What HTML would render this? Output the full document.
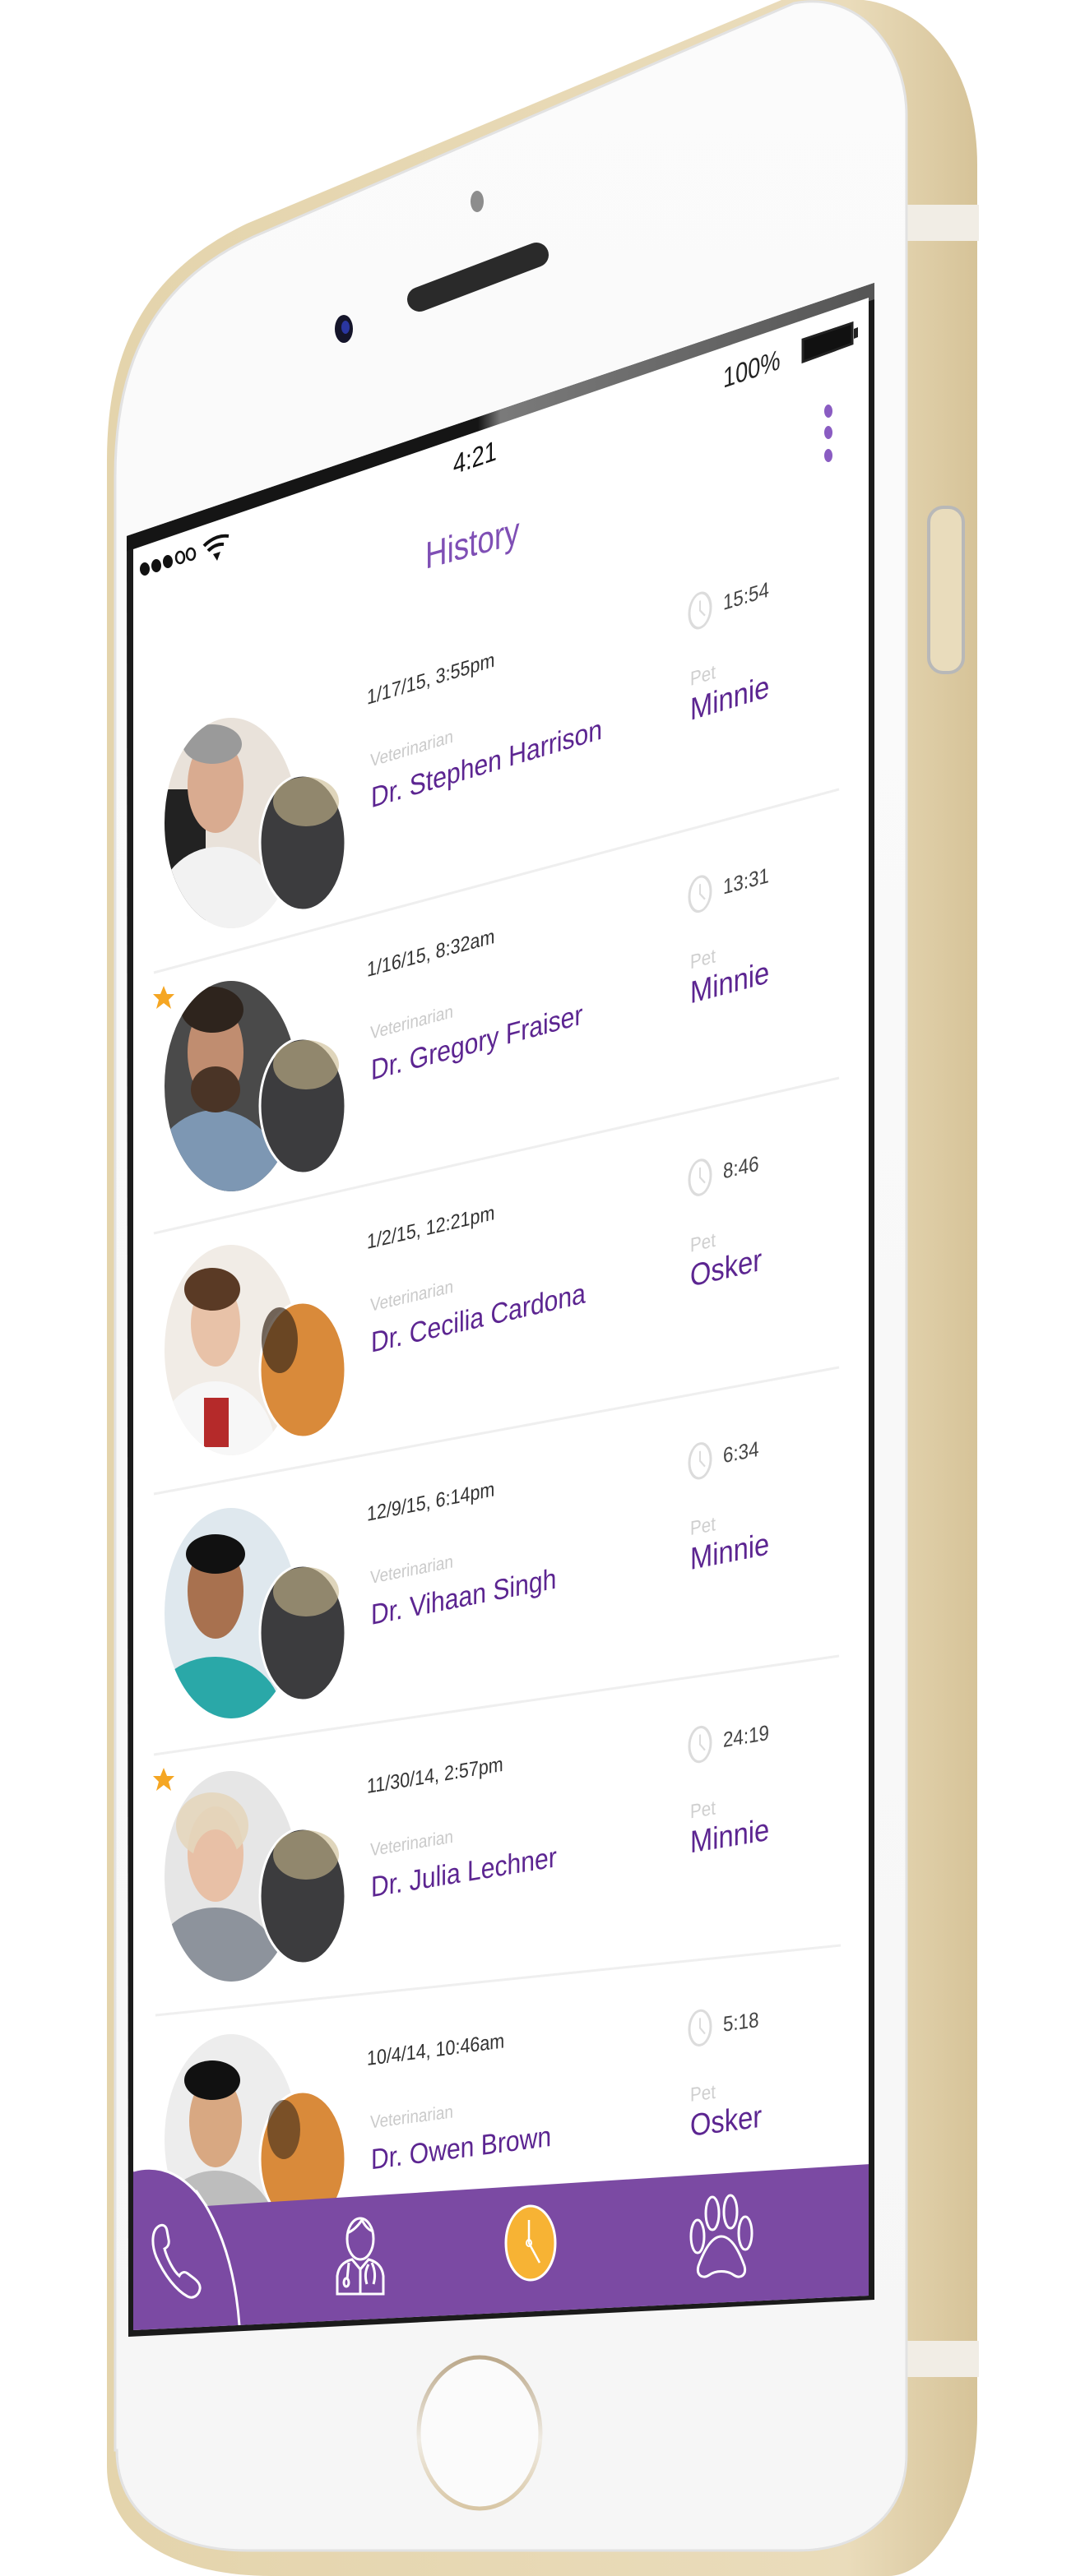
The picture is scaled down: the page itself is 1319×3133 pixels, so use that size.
<!DOCTYPE html>
<html><head><meta charset="utf-8"><style>
html,body{margin:0;padding:0;background:#fff;}
body{width:1319px;height:3133px;overflow:hidden;}
svg{display:block;}
text{font-family:"Liberation Sans",sans-serif;}
</style></head><body>
<svg width="1319" height="3133" viewBox="0 0 1319 3133" xmlns="http://www.w3.org/2000/svg">
<defs>
<linearGradient id="gold" x1="0" x2="1" y1="0" y2="0">
<stop offset="0" stop-color="#e4d4ac"/><stop offset="0.85" stop-color="#eadcbb"/><stop offset="1" stop-color="#d6c398"/>
</linearGradient>
<linearGradient id="face" x1="0" x2="0" y1="0" y2="1">
<stop offset="0" stop-color="#fbfbfb"/><stop offset="1" stop-color="#f6f6f6"/>
</linearGradient>
<linearGradient id="bez" x1="0" x2="1" y1="0" y2="0">
<stop offset="0" stop-color="#151515"/><stop offset="0.47" stop-color="#151515"/><stop offset="0.5" stop-color="#7a7a7a"/><stop offset="1" stop-color="#555"/>
</linearGradient>
<linearGradient id="home" x1="0" x2="0" y1="0" y2="1">
<stop offset="0" stop-color="#bba88a"/><stop offset="0.55" stop-color="#f0ece4"/><stop offset="1" stop-color="#d8c6a4"/>
</linearGradient>
<clipPath id="scr"><polygon points="162,668 1056,362 1056,2792 162,2834"/></clipPath>
</defs>

<!-- phone body -->
<path d="M130,3000 L130,560 C130,420 180,330 300,272 L950,0 L1050,0 C1140,12 1188,100 1188,200 L1188,2940 C1188,3050 1130,3133 1080,3133 L330,3133 C220,3133 130,3090 130,3000 Z" fill="url(#gold)"/>
<rect x="1100" y="249" width="90" height="44" fill="#f1ede5"/>
<rect x="1100" y="2847" width="90" height="44" fill="#f1ede5"/>
<rect x="1129" y="617" width="42" height="201" rx="18" fill="#e9dcbc" stroke="#b8b8b8" stroke-width="4"/>
<path d="M140,2980 L140,580 C140,435 190,342 308,288 L965,4 C1045,-12 1102,60 1102,140 L1102,2985 C1102,3060 1045,3102 970,3102 L300,3102 C210,3102 142,3060 142,2980 Z" fill="url(#face)" stroke="#e2e2e2" stroke-width="3"/>

<!-- earpiece, camera, sensor -->
<line x1="510" y1="364" x2="652" y2="310" stroke="#2a2a2a" stroke-width="30" stroke-linecap="round"/>
<ellipse cx="418" cy="400" rx="11" ry="17" fill="#15152a"/>
<ellipse cx="420" cy="398" rx="5" ry="8" fill="#2a36a0"/>
<ellipse cx="580" cy="245" rx="8" ry="13" fill="#8d8d8d"/>

<!-- home button -->
<ellipse cx="583" cy="2959" rx="74" ry="92" fill="#fbfbfb" stroke="url(#home)" stroke-width="5"/>

<!-- screen -->
<polygon points="154,652 1063,344 1063,2797 156,2842" fill="#1b1b1b"/>
<polygon points="154,652 1063,344 1063,364 154,670" fill="url(#bez)"/>
<polygon points="162,668 1056,362 1056,2792 162,2834" fill="#fff"/>

<g clip-path="url(#scr)">
<!-- status bar -->
<text transform="matrix(0.8,-0.272,0,1,551,577)" font-size="34" fill="#111">4:21</text>
<text transform="matrix(0.8,-0.272,0,1,879,472)" font-size="34" fill="#222">100%</text>
<polygon points="976,413 1036,393 1036,418 976,440" fill="#111" stroke="#222" stroke-width="3"/>
<polygon points="1038,400 1043,398 1043,410 1038,412" fill="#222"/>
<g fill="#111">
<ellipse cx="176" cy="692" rx="6" ry="8"/><ellipse cx="190" cy="688" rx="6" ry="8"/><ellipse cx="204" cy="683" rx="6" ry="8"/>
</g>
<g fill="none" stroke="#111" stroke-width="2.5"><ellipse cx="219" cy="678" rx="5" ry="7"/><ellipse cx="232" cy="674" rx="5" ry="7"/></g>
<path d="M248,664 Q262,650 278,652 M253,670 Q262,661 272,662" stroke="#111" stroke-width="4" fill="none"/>
<polygon points="259,674 268,671 264,682" fill="#111"/>
<g fill="#8a5cc2"><ellipse cx="1007" cy="500" rx="5" ry="8"/><ellipse cx="1007" cy="526" rx="5" ry="8"/><ellipse cx="1007" cy="554" rx="5" ry="8"/></g>
<text transform="matrix(0.8,-0.22,0,1,517,692)" font-size="46" fill="#7f4fb5">History</text>

<line x1="187" y1="1183" x2="1020" y2="960" stroke="#efefef" stroke-width="3"/>
<line x1="187" y1="1500" x2="1020" y2="1311" stroke="#efefef" stroke-width="3"/>
<line x1="187" y1="1817" x2="1020" y2="1663" stroke="#efefef" stroke-width="3"/>
<line x1="187" y1="2134" x2="1020" y2="2014" stroke="#efefef" stroke-width="3"/>
<line x1="189" y1="2451" x2="1022" y2="2366" stroke="#efefef" stroke-width="3"/>

<!-- avatars -->
<g>
<clipPath id="c1"><ellipse cx="281" cy="1001" rx="81" ry="128"/></clipPath>
<g clip-path="url(#c1)"><rect x="190" y="860" width="200" height="280" fill="#e9e2da"/><rect x="190" y="960" width="60" height="160" fill="#222"/><ellipse cx="265" cy="1110" rx="75" ry="80" fill="#f2f2f2"/><ellipse cx="262" cy="955" rx="34" ry="58" fill="#d9ab90"/><ellipse cx="258" cy="905" rx="36" ry="24" fill="#9a9a9a"/></g>
<ellipse cx="368" cy="1025" rx="52" ry="82" fill="#3c3c3e" stroke="#fff" stroke-width="3"/><ellipse cx="372" cy="975" rx="40" ry="30" fill="#c9b98e" opacity="0.6"/>
</g>
<g>
<clipPath id="c2"><ellipse cx="281" cy="1321" rx="81" ry="128"/></clipPath>
<g clip-path="url(#c2)"><rect x="190" y="1180" width="200" height="280" fill="#4a4a4a"/><ellipse cx="262" cy="1435" rx="80" ry="85" fill="#7d97b3"/><ellipse cx="262" cy="1280" rx="34" ry="60" fill="#c08d70"/><ellipse cx="262" cy="1325" rx="30" ry="28" fill="#4a3426"/><ellipse cx="258" cy="1228" rx="38" ry="28" fill="#2e241d"/></g>
<ellipse cx="368" cy="1345" rx="52" ry="82" fill="#3c3c3e" stroke="#fff" stroke-width="3"/><ellipse cx="372" cy="1295" rx="40" ry="30" fill="#c9b98e" opacity="0.6"/>
</g>
<g>
<clipPath id="c3"><ellipse cx="281" cy="1642" rx="81" ry="128"/></clipPath>
<g clip-path="url(#c3)"><rect x="190" y="1500" width="200" height="280" fill="#f1ece6"/><ellipse cx="262" cy="1760" rx="72" ry="80" fill="#f7f7f7"/><rect x="248" y="1700" width="30" height="60" fill="#b52a2a"/><ellipse cx="262" cy="1610" rx="30" ry="52" fill="#e8c2a8"/><ellipse cx="258" cy="1568" rx="34" ry="26" fill="#5a3a25"/></g>
<ellipse cx="368" cy="1666" rx="52" ry="82" fill="#d98a3a" stroke="#fff" stroke-width="3"/><ellipse cx="340" cy="1630" rx="22" ry="40" fill="#3a2a1a" opacity="0.7"/>
</g>
<g>
<clipPath id="c4"><ellipse cx="281" cy="1962" rx="81" ry="128"/></clipPath>
<g clip-path="url(#c4)"><rect x="190" y="1820" width="200" height="280" fill="#dfe8ee"/><ellipse cx="262" cy="2085" rx="80" ry="70" fill="#2aa8a8"/><ellipse cx="262" cy="1935" rx="34" ry="58" fill="#a8714f"/><ellipse cx="262" cy="1890" rx="36" ry="24" fill="#111"/></g>
<ellipse cx="368" cy="1986" rx="52" ry="82" fill="#3c3c3e" stroke="#fff" stroke-width="3"/><ellipse cx="372" cy="1936" rx="40" ry="30" fill="#c9b98e" opacity="0.6"/>
</g>
<g>
<clipPath id="c5"><ellipse cx="281" cy="2282" rx="81" ry="128"/></clipPath>
<g clip-path="url(#c5)"><rect x="190" y="2140" width="200" height="280" fill="#e6e6e6"/><ellipse cx="262" cy="2400" rx="80" ry="80" fill="#8d939c"/><ellipse cx="262" cy="2255" rx="34" ry="58" fill="#e8c0a6"/><ellipse cx="258" cy="2220" rx="44" ry="40" fill="#e4d6bc" opacity="0.9"/><ellipse cx="262" cy="2265" rx="28" ry="40" fill="#e8c0a6"/></g>
<ellipse cx="368" cy="2306" rx="52" ry="82" fill="#3c3c3e" stroke="#fff" stroke-width="3"/><ellipse cx="372" cy="2256" rx="40" ry="30" fill="#c9b98e" opacity="0.6"/>
</g>
<g>
<clipPath id="c6"><ellipse cx="281" cy="2602" rx="81" ry="128"/></clipPath>
<g clip-path="url(#c6)"><rect x="190" y="2460" width="200" height="280" fill="#ededed"/><ellipse cx="262" cy="2720" rx="75" ry="80" fill="#bdbdbd"/><ellipse cx="262" cy="2580" rx="32" ry="56" fill="#d8a882"/><ellipse cx="258" cy="2530" rx="34" ry="24" fill="#111"/></g>
<ellipse cx="368" cy="2626" rx="52" ry="82" fill="#d98a3a" stroke="#fff" stroke-width="3"/><ellipse cx="345" cy="2590" rx="20" ry="36" fill="#3a2a1a" opacity="0.6"/>
</g>

<!-- stars -->
<polygon points="199,1199 203,1209 212,1209 205,1216 208,1227 199,1220 190,1227 193,1216 186,1209 195,1209" fill="#f5a623"/>
<polygon points="199,2150 203,2160 212,2160 205,2167 208,2178 199,2171 190,2178 193,2167 186,2160 195,2160" fill="#f5a623"/>

<!-- row text groups -->
<g transform="matrix(1,-0.30,0,1,446,848)">
<text transform="scale(0.86,1)" y="9" font-size="25" fill="#333">1/17/15, 3:55pm</text>
<text transform="translate(4,0) scale(0.86,1)" y="86" font-size="22" fill="#cacaca">Veterinarian</text>
<text transform="translate(5,0) scale(0.86,1)" y="136" font-size="35" fill="#5c2591">Dr. Stephen Harrison</text>
<ellipse cx="405" cy="16" rx="13" ry="21" fill="none" stroke="#dcdcdc" stroke-width="3"/><path d="M405,4 L405,16 L411,24" stroke="#dcdcdc" stroke-width="2" fill="none"/>
<text transform="translate(433,0) scale(0.86,1)" y="24" font-size="26" fill="#444">15:54</text>
<text transform="translate(393,0) scale(0.86,1)" y="104" font-size="24" fill="#cfcfcf">Pet</text>
<text transform="translate(393,0) scale(0.86,1)" y="146" font-size="38" fill="#5c2591">Minnie</text>
</g>
<g transform="matrix(1,-0.266,0,1,446,1179)">
<text transform="scale(0.86,1)" y="9" font-size="25" fill="#333">1/16/15, 8:32am</text>
<text transform="translate(4,0) scale(0.86,1)" y="86" font-size="22" fill="#cacaca">Veterinarian</text>
<text transform="translate(5,0) scale(0.86,1)" y="136" font-size="35" fill="#5c2591">Dr. Gregory Fraiser</text>
<ellipse cx="405" cy="16" rx="13" ry="21" fill="none" stroke="#dcdcdc" stroke-width="3"/><path d="M405,4 L405,16 L411,24" stroke="#dcdcdc" stroke-width="2" fill="none"/>
<text transform="translate(433,0) scale(0.86,1)" y="24" font-size="26" fill="#444">13:31</text>
<text transform="translate(393,0) scale(0.86,1)" y="104" font-size="24" fill="#cfcfcf">Pet</text>
<text transform="translate(393,0) scale(0.86,1)" y="146" font-size="38" fill="#5c2591">Minnie</text>
</g>
<g transform="matrix(1,-0.232,0,1,446,1510)">
<text transform="scale(0.86,1)" y="9" font-size="25" fill="#333">1/2/15, 12:21pm</text>
<text transform="translate(4,0) scale(0.86,1)" y="86" font-size="22" fill="#cacaca">Veterinarian</text>
<text transform="translate(5,0) scale(0.86,1)" y="136" font-size="35" fill="#5c2591">Dr. Cecilia Cardona</text>
<ellipse cx="405" cy="16" rx="13" ry="21" fill="none" stroke="#dcdcdc" stroke-width="3"/><path d="M405,4 L405,16 L411,24" stroke="#dcdcdc" stroke-width="2" fill="none"/>
<text transform="translate(433,0) scale(0.86,1)" y="24" font-size="26" fill="#444">8:46</text>
<text transform="translate(393,0) scale(0.86,1)" y="104" font-size="24" fill="#cfcfcf">Pet</text>
<text transform="translate(393,0) scale(0.86,1)" y="146" font-size="38" fill="#5c2591">Osker</text>
</g>
<g transform="matrix(1,-0.198,0,1,446,1841)">
<text transform="scale(0.86,1)" y="9" font-size="25" fill="#333">12/9/15, 6:14pm</text>
<text transform="translate(4,0) scale(0.86,1)" y="86" font-size="22" fill="#cacaca">Veterinarian</text>
<text transform="translate(5,0) scale(0.86,1)" y="136" font-size="35" fill="#5c2591">Dr. Vihaan Singh</text>
<ellipse cx="405" cy="16" rx="13" ry="21" fill="none" stroke="#dcdcdc" stroke-width="3"/><path d="M405,4 L405,16 L411,24" stroke="#dcdcdc" stroke-width="2" fill="none"/>
<text transform="translate(433,0) scale(0.86,1)" y="24" font-size="26" fill="#444">6:34</text>
<text transform="translate(393,0) scale(0.86,1)" y="104" font-size="24" fill="#cfcfcf">Pet</text>
<text transform="translate(393,0) scale(0.86,1)" y="146" font-size="38" fill="#5c2591">Minnie</text>
</g>
<g transform="matrix(1,-0.164,0,1,446,2172)">
<text transform="scale(0.86,1)" y="9" font-size="25" fill="#333">11/30/14, 2:57pm</text>
<text transform="translate(4,0) scale(0.86,1)" y="86" font-size="22" fill="#cacaca">Veterinarian</text>
<text transform="translate(5,0) scale(0.86,1)" y="136" font-size="35" fill="#5c2591">Dr. Julia Lechner</text>
<ellipse cx="405" cy="16" rx="13" ry="21" fill="none" stroke="#dcdcdc" stroke-width="3"/><path d="M405,4 L405,16 L411,24" stroke="#dcdcdc" stroke-width="2" fill="none"/>
<text transform="translate(433,0) scale(0.86,1)" y="24" font-size="26" fill="#444">24:19</text>
<text transform="translate(393,0) scale(0.86,1)" y="104" font-size="24" fill="#cfcfcf">Pet</text>
<text transform="translate(393,0) scale(0.86,1)" y="146" font-size="38" fill="#5c2591">Minnie</text>
</g>
<g transform="matrix(1,-0.13,0,1,446,2503)">
<text transform="scale(0.86,1)" y="9" font-size="25" fill="#333">10/4/14, 10:46am</text>
<text transform="translate(4,0) scale(0.86,1)" y="86" font-size="22" fill="#cacaca">Veterinarian</text>
<text transform="translate(5,0) scale(0.86,1)" y="136" font-size="35" fill="#5c2591">Dr. Owen Brown</text>
<ellipse cx="405" cy="16" rx="13" ry="21" fill="none" stroke="#dcdcdc" stroke-width="3"/><path d="M405,4 L405,16 L411,24" stroke="#dcdcdc" stroke-width="2" fill="none"/>
<text transform="translate(433,0) scale(0.86,1)" y="24" font-size="26" fill="#444">5:18</text>
<text transform="translate(393,0) scale(0.86,1)" y="104" font-size="24" fill="#cfcfcf">Pet</text>
<text transform="translate(393,0) scale(0.86,1)" y="146" font-size="38" fill="#5c2591">Osker</text>
</g>

<!-- nav bar -->
<path d="M162,2840 L162,2640 Q205,2628 240,2668 L251,2683 L1058,2632 L1058,2800 Z" fill="#7b4aa3"/>
<path d="M162,2640 Q205,2628 240,2668 L251,2683" fill="none" stroke="#fff" stroke-width="3"/>
<path d="M238,2664 C268,2705 286,2760 291,2828" fill="none" stroke="#fff" stroke-width="3"/>
<path d="M194,2707 C184,2712 184,2730 190,2745 C200,2768 215,2786 228,2793 C236,2797 242,2790 243,2784 C244,2779 241,2775 236,2771 L228,2765 C224,2762 220,2764 218,2768 C210,2761 203,2746 200,2735 C204,2733 206,2729 205,2724 L203,2713 C202,2707 198,2705 194,2707 Z" fill="none" stroke="#fff" stroke-width="3"/>
<g fill="none" stroke="#fff" stroke-width="3">
<ellipse cx="438" cy="2723" rx="16" ry="25"/>
<path d="M422,2716 Q432,2712 440,2700 Q446,2712 454,2714"/>
<path d="M410,2790 L410,2768 Q412,2752 428,2748 L438,2760 L448,2748 Q464,2752 466,2768 L466,2790 Z"/>
<line x1="438" y1="2760" x2="438" y2="2790"/>
<path d="M424,2752 L422,2772"/><ellipse cx="421" cy="2776" rx="3" ry="5"/>
<path d="M452,2752 Q458,2765 454,2778 M446,2778 Q442,2765 448,2754"/>
</g>
<ellipse cx="645" cy="2728" rx="30" ry="45" fill="#f7b334" stroke="#fff" stroke-width="3"/>
<path d="M643,2700 L643,2728 L656,2752" fill="none" stroke="#fff" stroke-width="2.5"/>
<ellipse cx="643" cy="2728" rx="3" ry="4" fill="none" stroke="#fff" stroke-width="2"/>
<g fill="none" stroke="#fff" stroke-width="3">
<ellipse cx="866" cy="2692" rx="8" ry="20"/><ellipse cx="888" cy="2690" rx="8" ry="20"/>
<ellipse cx="848" cy="2720" rx="8" ry="20"/><ellipse cx="906" cy="2716" rx="8" ry="20"/>
<path d="M877,2720 C863,2720 853,2745 849,2756 C846,2768 855,2772 862,2767 C870,2761 884,2761 892,2767 C899,2772 908,2768 905,2756 C901,2745 891,2720 877,2720 Z"/>
</g>
</g>
</svg>
</body></html>
